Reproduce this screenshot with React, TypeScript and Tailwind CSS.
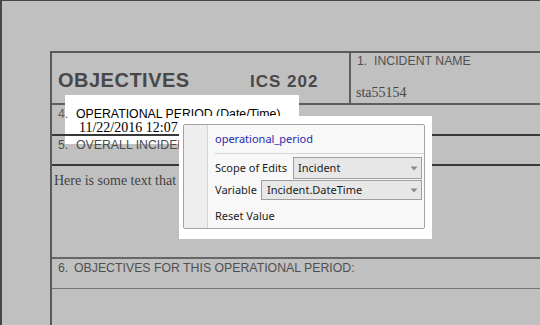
import React from "react";

function Arrow() {
  return (
    <svg width="8" height="5" viewBox="0 0 8 5" className="shrink-0">
      <path d="M0.5 0.5 L7.5 0.5 L4 4.5 Z" fill="#8a8a8a" />
    </svg>
  );
}

export default function App() {
  return (
    <div className="relative w-[540px] h-[325px] overflow-hidden bg-[#c0c0c0] border-t border-l-2 border-[#474747]">
      <div className="pl-[48px] pt-[50px] h-full">
        <div className="w-[600px] h-full border-l-2 border-t-2 border-[#595959] flex flex-col font-['Liberation_Sans',Arial,sans-serif] text-[#505050]">
          {/* Row 1 */}
          <div className="flex h-[52px] shrink-0 border-b-2 border-[#5e5e5e]">
            <div className="w-[299px] border-r-2 border-[#5e5e5e] pl-[6px] pt-[17px] flex items-baseline">
              <span className="w-[192px] text-[20px] leading-[20px] font-bold tracking-[0.5px] text-[#484848]">
                OBJECTIVES
              </span>
              <span className="text-[17px] leading-[17px] font-bold tracking-[1px] text-[#484848]">ICS 202</span>
            </div>
            <div className="flex flex-col pl-[6px] pt-[1px]">
              <div className="flex text-[12.3px] leading-[14px]">
                <span className="w-[17px]">1.</span>
                <span>INCIDENT NAME</span>
              </div>
              <div className="mt-[18px] -ml-[1px] font-['Liberation_Serif',serif] text-[14px] leading-[14px] text-[#454545]">
                sta55154
              </div>
            </div>
          </div>
          {/* Row 4 */}
          <div className="relative z-[2] h-[31px] shrink-0 border-b-2 border-[#383838] pl-[6px] pt-[2px]">
            <div className="flex text-[12.3px] leading-[14px]">
              <span className="w-[18px] text-[#5a5a5a]">4.</span>
              <span className="text-black">OPERATIONAL PERIOD (Date/Time)</span>
            </div>
            <div className="pl-[21px] font-['Liberation_Serif',serif] text-[14px] leading-[14px] text-black">
              11/22/2016 12:07 PM
            </div>
          </div>
          {/* Row 5 */}
          <div className="relative z-[2] h-[30px] shrink-0 border-b-2 border-[#383838] pl-[6px] pt-[2px]">
            <div className="flex text-[12.3px] leading-[14px]">
              <span className="w-[18px]">5.</span>
              <span className="text-[#4a4a4a]">OVERALL INCIDENT</span>
            </div>
          </div>
          {/* Content */}
          <div className="h-[93px] shrink-0 border-b-2 border-[#666666] pl-[2px] pt-[8px]">
            <div className="font-['Liberation_Serif',serif] text-[14px] leading-[14px] text-[#414141]">
              Here is some text that I
            </div>
          </div>
          {/* Row 6 */}
          <div className="h-[30px] shrink-0 border-b border-[#767676] pl-[6px] pt-[2px]">
            <div className="flex text-[12.3px] leading-[14px]">
              <span className="w-[16px]">6.</span>
              <span>OBJECTIVES FOR THIS OPERATIONAL PERIOD:</span>
            </div>
          </div>
          <div className="flex-1" />
        </div>
      </div>

      {/* field highlight */}
      <div className="absolute z-[1] left-[63px] top-[94px] w-[234px] h-[49px] bg-white" />

      {/* popup */}
      <div className="absolute z-[3] left-[177px] top-[115px] w-[253px] h-[123px] bg-white pl-[4px] pt-[8px] font-['Noto_Sans',sans-serif] text-[11px] text-[#1c1c1c]">
        <div className="w-[242px] h-[105px] border border-[#a3a3a3] rounded-[2px] bg-[#f8f8f8] flex overflow-hidden">
          <div className="w-[24px] shrink-0 border-r border-[#d4d4d4] bg-[#eeeeee]" />
          <div className="flex-1 pl-[7px] flex flex-col">
            <div className="h-[29px] shrink-0 flex items-center border-b border-[#d6d6d6] text-[#2a2aae]">
              operational_period
            </div>
            <div className="mt-[3px] h-[22px] flex items-center">
              <span className="w-[78px] shrink-0">Scope of Edits</span>
              <div className="w-[129px] h-full border border-[#9e9e9e] bg-[#e7e7e7] flex items-center justify-between pl-[4px] pr-[3px]">
                <span>Incident</span>
                <Arrow />
              </div>
            </div>
            <div className="mt-[1px] h-[20px] flex items-center">
              <span className="w-[46px] shrink-0">Variable</span>
              <div className="w-[161px] h-full border border-[#9e9e9e] bg-[#e7e7e7] flex items-center justify-between pl-[5px] pr-[3px]">
                <span>Incident.DateTime</span>
                <Arrow />
              </div>
            </div>
            <div className="mt-[8px] h-[17px] flex items-center">Reset Value</div>
          </div>
        </div>
      </div>
    </div>
  );
}
